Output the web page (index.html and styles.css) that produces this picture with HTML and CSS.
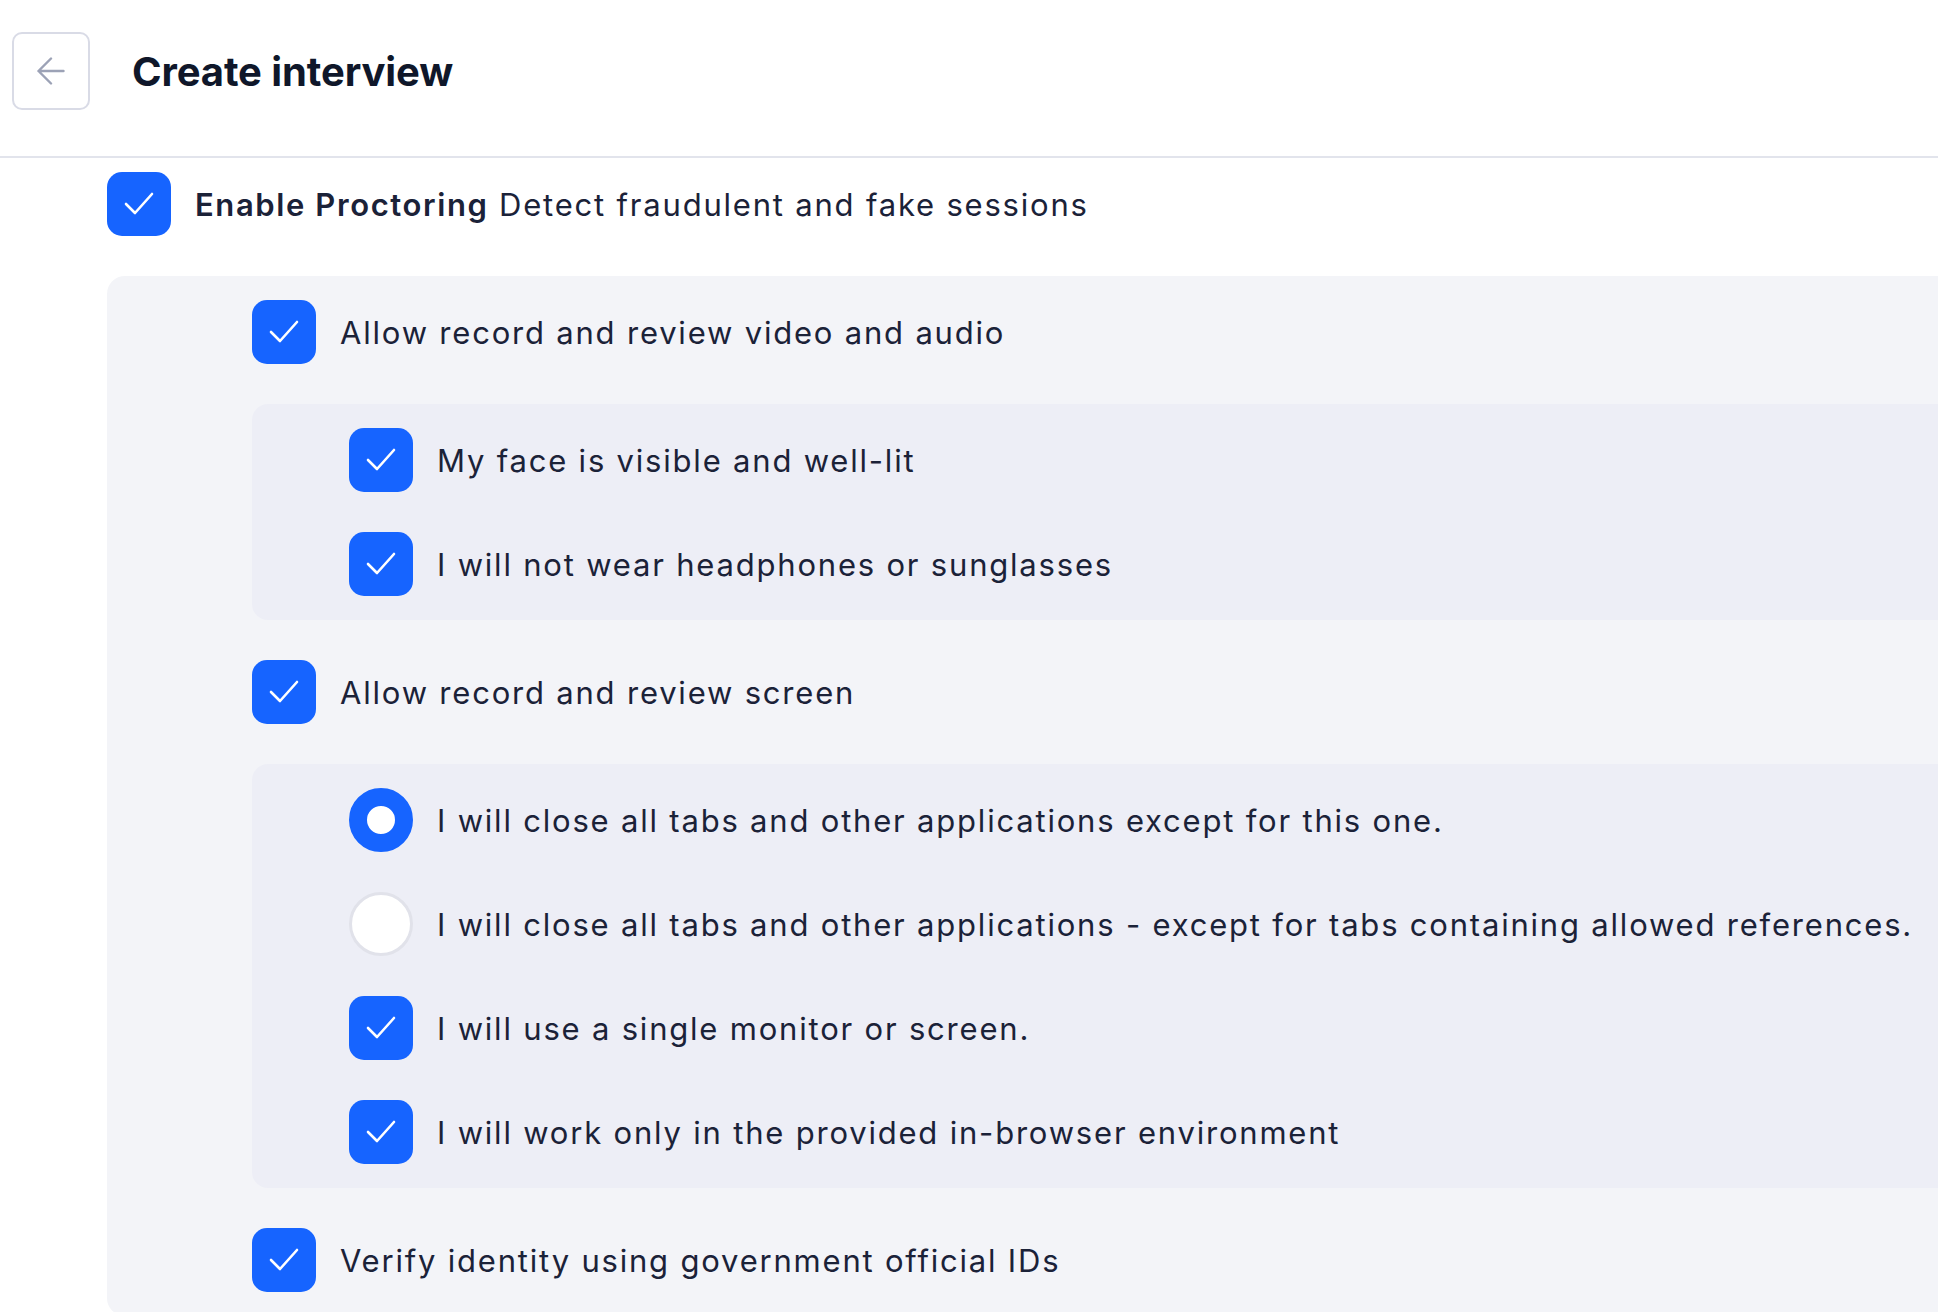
FILE: index.html
```html
<!DOCTYPE html>
<html lang="en">
<head>
    <meta charset="UTF-8">
    <meta name="viewport" content="width=device-width, initial-scale=1.0">
    <title>Create interview</title>
    <link rel="stylesheet" href="styles.css">
</head>
<body>
    <header class="topbar">
        <button class="back-btn" type="button" aria-label="Back">
            <svg width="28" height="28" viewBox="0 0 28 28" fill="none" stroke="#9ca2b6" stroke-width="2.4" stroke-linecap="round" stroke-linejoin="round">
                <path d="M1.5 14H26.5M14 1.5L1.5 14L14 26.5"/>
            </svg>
        </button>
        <h1>Create interview</h1>
    </header>

    <main class="content">
        <div class="group">
            <label class="option">
                <span class="check on">
                    <svg viewBox="0 0 64 64"><polyline points="19,32 28,41 45,22"/></svg>
                </span>
                <span class="label"><b>Enable Proctoring</b> Detect fraudulent and fake sessions</span>
            </label>

            <div class="panel">
                <div class="group">
                    <label class="option">
                        <span class="check on">
                            <svg viewBox="0 0 64 64"><polyline points="19,32 28,41 45,22"/></svg>
                        </span>
                        <span class="label">Allow record and review video and audio</span>
                    </label>

                    <div class="subpanel">
                        <div class="group">
                            <label class="option">
                                <span class="check on">
                                    <svg viewBox="0 0 64 64"><polyline points="19,32 28,41 45,22"/></svg>
                                </span>
                                <span class="label">My face is visible and well-lit</span>
                            </label>
                            <label class="option">
                                <span class="check on">
                                    <svg viewBox="0 0 64 64"><polyline points="19,32 28,41 45,22"/></svg>
                                </span>
                                <span class="label">I will not wear headphones or sunglasses</span>
                            </label>
                        </div>
                    </div>

                    <label class="option">
                        <span class="check on">
                            <svg viewBox="0 0 64 64"><polyline points="19,32 28,41 45,22"/></svg>
                        </span>
                        <span class="label">Allow record and review screen</span>
                    </label>

                    <div class="subpanel">
                        <div class="group">
                            <label class="option">
                                <span class="radio on"></span>
                                <span class="label">I will close all tabs and other applications except for this one.</span>
                            </label>
                            <label class="option">
                                <span class="radio"></span>
                                <span class="label">I will close all tabs and other applications - except for tabs containing allowed references.</span>
                            </label>
                            <label class="option">
                                <span class="check on">
                                    <svg viewBox="0 0 64 64"><polyline points="19,32 28,41 45,22"/></svg>
                                </span>
                                <span class="label">I will use a single monitor or screen.</span>
                            </label>
                            <label class="option">
                                <span class="check on">
                                    <svg viewBox="0 0 64 64"><polyline points="19,32 28,41 45,22"/></svg>
                                </span>
                                <span class="label">I will work only in the provided in-browser environment</span>
                            </label>
                        </div>
                    </div>

                    <label class="option">
                        <span class="check on">
                            <svg viewBox="0 0 64 64"><polyline points="19,32 28,41 45,22"/></svg>
                        </span>
                        <span class="label">Verify identity using government official IDs</span>
                    </label>
                </div>
            </div>
        </div>
    </main>
</body>
</html>
```

FILE: styles.css
```css
body {
    margin: 0;
    font-family: Inter, "Liberation Sans", sans-serif;
    color: #1b2238;
    background: #fff;
    overflow: hidden;
}
.topbar {
    display: flex;
    align-items: center;
    gap: 42px;
    height: 158px;
    box-sizing: border-box;
    padding: 0 12px 14px;
    border-bottom: 2px solid #e2e4ec;
}
.back-btn {
    width: 78px;
    height: 78px;
    display: flex;
    align-items: center;
    justify-content: center;
    background: #fff;
    border: 2px solid #d9dbe6;
    border-radius: 10px;
    padding: 0;
    cursor: pointer;
}
h1 {
    margin: 0;
    font-size: 40px;
    font-weight: 700;
    letter-spacing: -0.1px;
    color: #0f172a;
}
.content {
    padding: 14px 0 0 107px;
}
.group {
    display: flex;
    flex-direction: column;
    gap: 40px;
}
.option {
    display: flex;
    align-items: center;
    gap: 24px;
    cursor: pointer;
}
.label {
    font-size: 31px;
    letter-spacing: 1.8px;
    white-space: nowrap;
}
.label b {
    font-weight: 600;
    letter-spacing: 1.6px;
}
.check {
    flex: none;
    width: 64px;
    height: 64px;
    border-radius: 15px;
    background: #fff;
    display: flex;
}
.check.on {
    background: #1664ff;
}
.check svg {
    width: 64px;
    height: 64px;
    fill: none;
    stroke: #fff;
    stroke-width: 2.6;
    stroke-linecap: round;
    stroke-linejoin: round;
}
.radio {
    flex: none;
    width: 64px;
    height: 64px;
    box-sizing: border-box;
    border-radius: 50%;
    background: #fff;
    border: 3px solid #e1e2ea;
}
.radio.on {
    border: 18px solid #1664ff;
}
.panel {
    background: #f3f4f8;
    border-radius: 18px 0 0 18px;
    padding: 24px 0 24px 145px;
}
.subpanel {
    background: #edeef6;
    border-radius: 16px 0 0 16px;
    padding: 24px 0 24px 97px;
}
```
